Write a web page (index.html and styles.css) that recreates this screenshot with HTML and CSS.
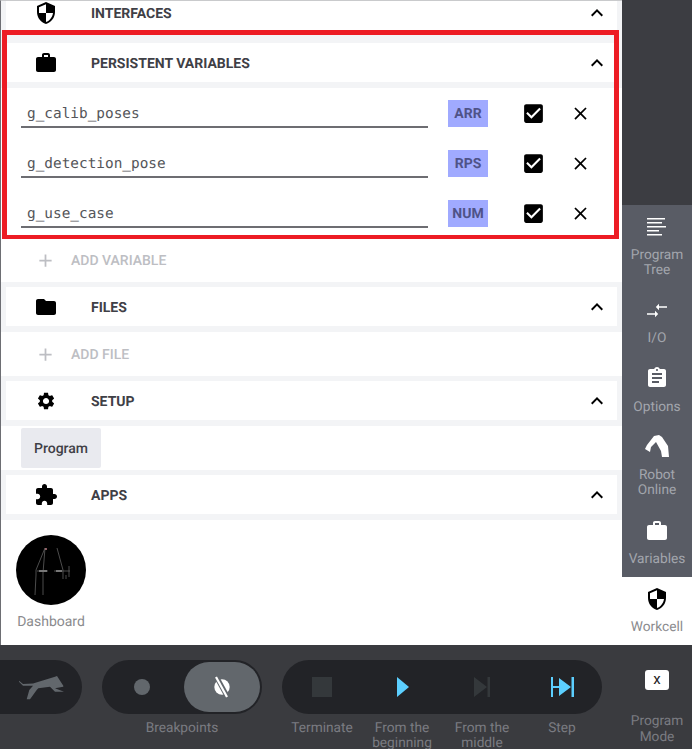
FILE: index.html
```html
<!DOCTYPE html>
<html lang="en">
<head>
    <meta charset="UTF-8">
    <meta name="viewport" content="width=device-width, initial-scale=1.0">
    <title>Workcell</title>
    <link rel="stylesheet" href="styles.css">
</head>
<body>
    <div class="main">
        <div class="panel">
            <div class="panel-scroll">
                <div class="section-head">
                    <div class="section-bar">
                        <svg class="section-icon" viewBox="0 0 24 24"><path d="M12 1L3 5v6c0 5.55 3.84 10.74 9 12 5.16-1.26 9-6.45 9-12V5l-9-4zm0 10.99h7c-.53 4.12-3.28 7.79-7 8.94V12H5V6.3l7-3.11v8.8z"/></svg>
                        <span class="section-title">INTERFACES</span>
                        <svg class="chevron" viewBox="0 0 24 24"><path d="M12 8l-6 6 1.41 1.41L12 10.83l4.59 4.58L18 14z"/></svg>
                    </div>
                </div>

                <div class="section-head">
                    <div class="section-bar">
                        <svg class="section-icon" viewBox="0 0 24 24"><path d="M20 6h-4V4c0-1.11-.89-2-2-2h-4c-1.11 0-2 .89-2 2v2H4c-1.11 0-1.99.89-1.99 2L2 19c0 1.11.89 2 2 2h16c1.11 0 2-.89 2-2V8c0-1.11-.89-2-2-2zm-6 0h-4V4h4v2z"/></svg>
                        <span class="section-title">PERSISTENT VARIABLES</span>
                        <svg class="chevron" viewBox="0 0 24 24"><path d="M12 8l-6 6 1.41 1.41L12 10.83l4.59 4.58L18 14z"/></svg>
                    </div>
                </div>
                <div class="var-row">
                    <div class="var-name">g_calib_poses</div>
                    <div class="var-type">ARR</div>
                    <svg class="var-check" viewBox="0 0 24 24"><path d="M19 3H5c-1.11 0-2 .9-2 2v14c0 1.1.89 2 2 2h14c1.11 0 2-.9 2-2V5c0-1.1-.89-2-2-2zm-9 14l-5-5 1.41-1.41L10 14.17l7.59-7.59L19 8l-9 9z"/></svg>
                    <svg class="var-close" viewBox="0 0 24 24"><path d="M19 6.41L17.59 5 12 10.59 6.41 5 5 6.41 10.59 12 5 17.59 6.41 19 12 13.41 17.59 19 19 17.59 13.41 12z"/></svg>
                </div>
                <div class="var-row">
                    <div class="var-name">g_detection_pose</div>
                    <div class="var-type">RPS</div>
                    <svg class="var-check" viewBox="0 0 24 24"><path d="M19 3H5c-1.11 0-2 .9-2 2v14c0 1.1.89 2 2 2h14c1.11 0 2-.9 2-2V5c0-1.1-.89-2-2-2zm-9 14l-5-5 1.41-1.41L10 14.17l7.59-7.59L19 8l-9 9z"/></svg>
                    <svg class="var-close" viewBox="0 0 24 24"><path d="M19 6.41L17.59 5 12 10.59 6.41 5 5 6.41 10.59 12 5 17.59 6.41 19 12 13.41 17.59 19 19 17.59 13.41 12z"/></svg>
                </div>
                <div class="var-row">
                    <div class="var-name">g_use_case</div>
                    <div class="var-type">NUM</div>
                    <svg class="var-check" viewBox="0 0 24 24"><path d="M19 3H5c-1.11 0-2 .9-2 2v14c0 1.1.89 2 2 2h14c1.11 0 2-.9 2-2V5c0-1.1-.89-2-2-2zm-9 14l-5-5 1.41-1.41L10 14.17l7.59-7.59L19 8l-9 9z"/></svg>
                    <svg class="var-close" viewBox="0 0 24 24"><path d="M19 6.41L17.59 5 12 10.59 6.41 5 5 6.41 10.59 12 5 17.59 6.41 19 12 13.41 17.59 19 19 17.59 13.41 12z"/></svg>
                </div>
                <div class="add-row">
                    <svg class="add-icon" viewBox="0 0 24 24"><path d="M19 13h-6v6h-2v-6H5v-2h6V5h2v6h6v2z"/></svg>
                    <span class="add-label">ADD VARIABLE</span>
                </div>

                <div class="section-head">
                    <div class="section-bar">
                        <svg class="section-icon" viewBox="0 0 24 24"><path d="M10 4H4c-1.1 0-1.99.9-1.99 2L2 18c0 1.1.9 2 2 2h16c1.1 0 2-.9 2-2V8c0-1.1-.9-2-2-2h-8l-2-2z"/></svg>
                        <span class="section-title">FILES</span>
                        <svg class="chevron" viewBox="0 0 24 24"><path d="M12 8l-6 6 1.41 1.41L12 10.83l4.59 4.58L18 14z"/></svg>
                    </div>
                </div>
                <div class="add-row">
                    <svg class="add-icon" viewBox="0 0 24 24"><path d="M19 13h-6v6h-2v-6H5v-2h6V5h2v6h6v2z"/></svg>
                    <span class="add-label">ADD FILE</span>
                </div>

                <div class="section-head">
                    <div class="section-bar">
                        <svg class="section-icon" viewBox="0 0 24 24"><path transform="translate(1.7 1.7) scale(.86)" d="M19.14 12.94c.04-.3.06-.61.06-.94 0-.32-.02-.64-.07-.94l2.03-1.58c.18-.14.23-.41.12-.61l-1.92-3.32c-.12-.22-.37-.29-.59-.22l-2.39.96c-.5-.38-1.03-.7-1.62-.94l-.36-2.54c-.04-.24-.24-.41-.48-.41h-3.84c-.24 0-.43.17-.47.41l-.36 2.54c-.59.24-1.13.57-1.62.94l-2.39-.96c-.22-.08-.47 0-.59.22L2.74 8.87c-.12.21-.08.47.12.61l2.03 1.58c-.05.3-.09.63-.09.94s.02.64.07.94l-2.03 1.58c-.18.14-.23.41-.12.61l1.92 3.32c.12.22.37.29.59.22l2.39-.96c.5.38 1.03.7 1.62.94l.36 2.54c.05.24.24.41.48.41h3.84c.24 0 .44-.17.47-.41l.36-2.54c.59-.24 1.13-.56 1.62-.94l2.39.96c.22.08.47 0 .59-.22l1.92-3.32c.12-.22.07-.47-.12-.61l-2.01-1.58zM12 15.6c-1.98 0-3.6-1.62-3.6-3.6s1.62-3.6 3.6-3.6 3.6 1.62 3.6 3.6-1.62 3.6-3.6 3.6z"/></svg>
                        <span class="section-title">SETUP</span>
                        <svg class="chevron" viewBox="0 0 24 24"><path d="M12 8l-6 6 1.41 1.41L12 10.83l4.59 4.58L18 14z"/></svg>
                    </div>
                </div>
                <div class="setup-row">
                    <div class="setup-chip">Program</div>
                </div>

                <div class="section-head">
                    <div class="section-bar">
                        <svg class="section-icon" viewBox="0 0 24 24"><path d="M20.5 11H19V7c0-1.1-.9-2-2-2h-4V3.5C13 2.12 11.88 1 10.5 1S8 2.12 8 3.5V5H4c-1.1 0-1.99.9-1.99 2v3.8H3.5c1.49 0 2.7 1.21 2.7 2.7s-1.21 2.7-2.7 2.7H2V20c0 1.1.9 2 2 2h3.8v-1.5c0-1.49 1.21-2.7 2.7-2.7 1.49 0 2.7 1.21 2.7 2.7V22H17c1.1 0 2-.9 2-2v-4h1.5c1.38 0 2.5-1.12 2.5-2.5S21.88 11 20.5 11z"/></svg>
                        <span class="section-title">APPS</span>
                        <svg class="chevron" viewBox="0 0 24 24"><path d="M12 8l-6 6 1.41 1.41L12 10.83l4.59 4.58L18 14z"/></svg>
                    </div>
                </div>
                <div class="app">
                    <svg class="app-logo" viewBox="0 0 70 70">
                        <circle cx="35" cy="35" r="35" fill="#000"/>
                        <g fill="none" stroke="#5f5f5f" stroke-width=".8">
                            <path d="M29 13L20 35V40L19 60"/>
                            <path d="M29 13L27 38V60"/>
                            <path d="M41 13L47 35V44"/>
                            <path d="M21 36H32M38 36H54M53 31V42M50 40V44"/>
                        </g>
                        <path d="M23 36H31M40 36H46" stroke="#777" stroke-width="2"/>
                        <circle cx="30" cy="14" r="1" fill="#b87a80"/>
                    </svg>
                    <div class="app-name">Dashboard</div>
                </div>
            </div>
            <div class="highlight"></div>
        </div>

        <div class="rail">
            <div class="rail-item">
                <svg class="rail-icon" viewBox="0 0 24 24"><path d="M2 3h18v1.6H2zM2 7h15v1.6H2zM2 11h19v1.6H2zM2 15h12v1.6H2zM2 19h15v1.6H2z"/></svg>
                <div>Program<br>Tree</div>
            </div>
            <div class="rail-item">
                <svg class="rail-icon" viewBox="0 0 24 24"><path d="M14 8.2h8v1.6h-8v2.4L10.8 9 14 5.800zM2 15.200h8v-2.400l3.200 3.200-3.200 3.200v-2.400H2z"/></svg>
                <div>I/O</div>
            </div>
            <div class="rail-item rail-item-loose">
                <svg class="rail-icon" viewBox="0 0 24 24"><path d="M19 3h-4.180C14.400 1.840 13.300 1 12 1c-1.300 0-2.400.84-2.820 2H5c-1.100 0-2 .9-2 2v14c0 1.100.9 2 2 2h14c1.100 0 2-.9 2-2V5c0-1.100-.9-2-2-2zm-7 0c.55 0 1 .45 1 1s-.45 1-1 1-1-.45-1-1 .45-1 1-1zm2 14H7v-2h7v2zm3-4H7v-2h10v2zm0-4H7V7h10v2z"/></svg>
                <div>Options</div>
            </div>
            <div class="rail-item rail-item-robot">
                <svg class="rail-icon" viewBox="645 435 24 24"><path d="M645 450L647 446L654 437L659 436L662 438L668 447L669 458L662 458L661 452L656 443L651 448L650 453Z"/></svg>
                <div>Robot<br>Online</div>
            </div>
            <div class="rail-item">
                <svg class="rail-icon" viewBox="0 0 24 24"><path d="M20 6h-4V4c0-1.110-.89-2-2-2h-4c-1.110 0-2 .89-2 2v2H4c-1.110 0-1.990.89-1.990 2L2 19c0 1.110.89 2 2 2h16c1.110 0 2-.89 2-2V8c0-1.110-.89-2-2-2zm-6 0h-4V4h4v2z"/></svg>
                <div>Variables</div>
            </div>
            <div class="rail-item rail-item-active">
                <svg class="rail-icon" viewBox="0 0 24 24"><path d="M12 1L3 5v6c0 5.55 3.84 10.74 9 12 5.16-1.26 9-6.45 9-12V5l-9-4zm0 10.99h7c-.53 4.12-3.28 7.79-7 8.94V12H5V6.3l7-3.11v8.8z"/></svg>
                <div>Workcell</div>
            </div>
        </div>
    </div>

    <div class="footer">
        <div class="pill pill-logo">
            <svg class="leopard" viewBox="18 675 46 25"><path d="M19 680.700L23 684L33 683.500L55 676.700L57 676L63.300 685.700V686.700L55 688.300L64 691.700H55L50 686.700L38.300 688.300L36.700 690L30 699.300H26.700L29.300 690L33 685.700H23L19 681.700Z"/></svg>
        </div>

        <div class="group">
            <div class="pill pill-toggle">
                <div class="toggle-off"><span class="toggle-dot"></span></div>
                <div class="toggle-on">
                    <svg class="toggle-icon" viewBox="0 0 24 24">
                        <circle cx="12" cy="12" r="7.700" fill="#fff"/>
                        <path d="M6 1L18 23" stroke="#62676c" stroke-width="5"/>
                        <path d="M6 2L17 22" stroke="#fff" stroke-width="2.200"/>
                    </svg>
                </div>
            </div>
            <div class="group-label">Breakpoints</div>
        </div>

        <div class="group">
            <div class="pill pill-controls">
                <svg class="control-icon" viewBox="0 0 24 24"><rect x="2" y="2" width="20" height="20" fill="#34383b"/></svg>
                <svg class="control-icon" viewBox="0 0 24 24"><path d="M7 2L19 12L7 22Z" fill="#5ccfff"/></svg>
                <svg class="control-icon" viewBox="0 0 24 24"><path d="M4 2L17 12L4 22ZM17.500 2H20V22H17.500Z" fill="#34383b"/></svg>
                <svg class="control-icon" viewBox="0 0 24 24"><path d="M1 2H3V11H9V3L21 12L9 21V13H3V22H1ZM21.500 2H24V22H21.500Z" fill="#5ccfff"/></svg>
            </div>
            <div class="control-labels">
                <div>Terminate</div>
                <div>From the<br>beginning</div>
                <div>From the<br>middle</div>
                <div>Step</div>
            </div>
        </div>

        <div class="mode">
            <div class="mode-key">x</div>
            <div class="mode-label">Program<br>Mode</div>
        </div>
    </div>
</body>
</html>
```

FILE: styles.css
```css
* {
    box-sizing: border-box;
}
html, body {
    margin: 0;
    height: 100%;
}
body {
    font-family: Roboto, sans-serif;
    font-size: 13.7px;
    text-rendering: geometricPrecision;
    background-color: #fff;
    overflow: hidden;
}
.main {
    display: flex;
    height: 645px;
}
.panel {
    position: relative;
    width: 622px;
    overflow: hidden;
    background-color: #fff;
    border-top: 1px solid #c9cacc;
    border-left: 1px solid #6d6e73;
}
.panel-scroll {
    margin-top: -13px;
}
.section-head {
    height: 50px;
    padding: 5px 5px 6px;
    background-color: #f3f4f6;
}
.section-bar {
    display: flex;
    align-items: center;
    height: 39px;
    padding: 0 8px 0 28px;
    background-color: #fff;
}
.section-icon {
    width: 24px;
    height: 24px;
    flex: none;
    fill: #000;
}
.section-title {
    flex: 1;
    margin-left: 33px;
    padding-top: 2px;
    font-size: 14px;
    font-weight: 700;
    color: #3f4046;
}
.chevron {
    width: 24px;
    height: 24px;
    fill: #000;
}
.var-row {
    display: flex;
    align-items: center;
    height: 50px;
    padding-left: 20px;
}
.var-name {
    align-self: flex-start;
    width: 407px;
    height: 40px;
    padding: 16px 0 0 6px;
    font-family: "DejaVu Sans Mono", monospace;
    font-size: 14.4px;
    line-height: 20px;
    color: #55565a;
    border-bottom: 2px solid #6d6d72;
}
.var-type {
    width: 40px;
    height: 27px;
    margin-left: 20px;
    padding-top: 1px;
    font-size: 14px;
    font-weight: 700;
    line-height: 27px;
    text-align: center;
    color: #4f5388;
    background-color: #a0aaff;
}
.var-check {
    width: 25px;
    height: 25px;
    margin-left: 33px;
    fill: #000;
}
.var-close {
    width: 21px;
    height: 21px;
    margin-left: 24px;
    fill: #000;
}
.add-row {
    display: flex;
    align-items: center;
    height: 44px;
    padding-left: 34px;
    font-size: 14px;
    font-weight: 500;
    color: #bdbec3;
}
.add-icon {
    width: 21px;
    height: 21px;
    margin-right: 15px;
    fill: #bdbec3;
}
.add-label {
    padding-top: 2px;
}
.setup-row {
    height: 44px;
    padding: 2px 0 0 20px;
}
.setup-chip {
    width: 80px;
    height: 40px;
    padding-top: 1px;
    font-size: 14px;
    font-weight: 500;
    line-height: 40px;
    text-align: center;
    color: #3f4046;
    background-color: #e9eaef;
    border-radius: 2px;
}
.app {
    width: 70px;
    margin: 15px 0 0 15px;
    text-align: center;
}
.app-logo {
    display: block;
    width: 70px;
    height: 70px;
}
.app-name {
    margin-top: 9px;
    font-size: 14px;
    line-height: 16px;
    white-space: nowrap;
    color: #8b8b8e;
}
.highlight {
    position: absolute;
    left: 1px;
    top: 29px;
    width: 617px;
    height: 209px;
    border: 5px solid #ed1c24;
    border-bottom-width: 4px;
}
.rail {
    display: flex;
    flex: 1;
    flex-direction: column;
    justify-content: flex-end;
    background-color: #3c3d42;
}
.rail-item {
    padding: 10px 0;
    line-height: 15px;
    text-align: center;
    color: #a3a6ad;
    background-color: #595c65;
}
.rail-item-loose {
    padding-bottom: 9px;
}
.rail-item-loose .rail-icon {
    margin-bottom: 10px;
}
.rail-item-robot {
    padding-bottom: 11px;
}
.rail-item-robot .rail-icon {
    margin-bottom: 10px;
}
.rail-item-active {
    color: #8b8b8e;
    background-color: #fff;
}
.rail-icon {
    display: block;
    width: 24px;
    height: 24px;
    margin: 0 auto 9px;
    fill: #fff;
}
.rail-item-active .rail-icon {
    fill: #000;
}
.footer {
    display: flex;
    gap: 20px;
    height: 104px;
    padding-top: 15px;
    overflow: hidden;
    background-color: #3a3b3f;
}
.pill {
    height: 54px;
    background-color: #222327;
    border-radius: 27px;
}
.pill-logo {
    display: flex;
    align-items: center;
    width: 82px;
    padding-left: 18px;
    border-radius: 0 27px 27px 0;
}
.leopard {
    width: 46px;
    height: 25px;
    fill: #62676c;
}
.pill-toggle {
    display: flex;
    width: 160px;
    padding: 2px;
}
.toggle-off {
    display: flex;
    flex: 1;
    align-items: center;
    justify-content: center;
    padding-right: 4px;
}
.toggle-dot {
    width: 16px;
    height: 16px;
    background-color: #62676c;
    border-radius: 50%;
}
.toggle-on {
    display: flex;
    align-items: center;
    justify-content: center;
    width: 76px;
    background-color: #62676c;
    border-radius: 25px;
}
.toggle-icon {
    width: 24px;
    height: 24px;
}
.group-label {
    margin-top: 7px;
    line-height: 15px;
    text-align: center;
    color: #7a7c82;
}
.pill-controls {
    display: grid;
    grid-template-columns: repeat(4, 80px);
    align-items: center;
    justify-items: center;
    width: 320px;
}
.control-icon {
    width: 24px;
    height: 24px;
}
.control-labels {
    display: grid;
    grid-template-columns: repeat(4, 80px);
    margin-top: 7px;
    line-height: 15px;
    text-align: center;
    color: #7a7c82;
}
.mode {
    width: 70px;
    text-align: center;
}
.mode-key {
    width: 24px;
    height: 20px;
    margin: 10px auto 0;
    font-size: 15px;
    line-height: 19px;
    color: #222;
    background-color: #fff;
    border-radius: 3px;
}
.mode-label {
    margin-top: 23px;
    line-height: 16px;
    color: #7a7c82;
}
```
